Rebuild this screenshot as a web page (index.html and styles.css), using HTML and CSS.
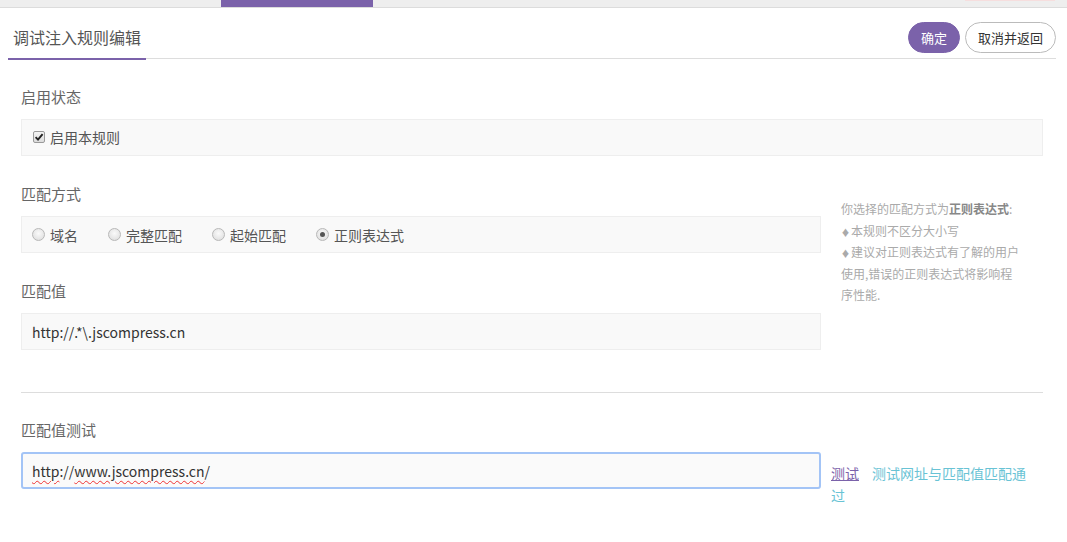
FILE: index.html
```html
<!DOCTYPE html>
<html>
<head>
    <meta charset="utf-8">
    <title>调试注入规则编辑</title>
    <link rel="stylesheet" href="styles.css">
</head>
<body>
    <div class="topbar">
        <span class="topbar-tab"></span>
        <span class="topbar-alert"></span>
    </div>
    <div class="page">
        <div class="page-head">
            <div class="page-title">调试注入规则编辑</div>
            <div class="head-actions">
                <button class="btn btn-primary">确定</button>
                <button class="btn btn-outline">取消并返回</button>
            </div>
        </div>

        <div class="content">
            <div class="field field-first">
                <div class="field-label">启用状态</div>
                <div class="field-box">
                    <label class="check">
                        <span class="check-box">
                            <svg width="10" height="10" viewBox="0 0 10 10"><path d="M1.6 5.2 L4 7.6 L8.6 2.2" fill="none" stroke="#222" stroke-width="1.9"/></svg>
                        </span>
                        启用本规则
                    </label>
                </div>
            </div>

            <div class="match-row">
                <div class="match-main">
                    <div class="field">
                        <div class="field-label">匹配方式</div>
                        <div class="field-box">
                            <label class="radio"><span class="radio-dot"></span>域名</label>
                            <label class="radio"><span class="radio-dot"></span>完整匹配</label>
                            <label class="radio"><span class="radio-dot"></span>起始匹配</label>
                            <label class="radio"><span class="radio-dot checked"></span>正则表达式</label>
                        </div>
                    </div>
                    <div class="field">
                        <div class="field-label">匹配值</div>
                        <div class="field-box value-text">http://.*\.jscompress.cn</div>
                    </div>
                </div>
                <div class="match-note">
                    你选择的匹配方式为<b>正则表达式</b>:<br>
                    <span class="mark">♦</span>本规则不区分大小写<br>
                    <span class="mark">♦</span>建议对正则表达式有了解的用户使用,错误的正则表达式将影响程序性能.
                </div>
            </div>

            <hr class="divider">

            <div class="field field-test">
                <div class="field-label">匹配值测试</div>
                <div class="test-row">
                    <div class="test-input"><span class="typo">http</span>://<span class="typo">www.jscompress.cn</span>/</div>
                    <div class="test-side">
                        <a class="test-link" href="#">测试</a><span class="test-ok">测试网址与匹配值匹配通过</span>
                    </div>
                </div>
            </div>
        </div>
    </div>
</body>
</html>
```

FILE: styles.css
```css
body {
    margin: 0;
    font-family: "Microsoft YaHei", "Noto Sans CJK SC", sans-serif;
    color: #333;
    background: #fff;
}
.topbar {
    display: flex;
    height: 7px;
    background: #eeeeee;
    border-bottom: 1px solid #dcdcdc;
}
.topbar-tab {
    width: 152px;
    margin-left: 221px;
    background: #7b62aa;
}
.topbar-alert {
    width: 90px;
    height: 1px;
    margin-left: auto;
    margin-right: 12px;
    background: #f6dede;
}
.page {
    padding: 0 11px 0 8px;
}
.page-head {
    display: flex;
    align-items: flex-start;
    height: 36px;
    padding-top: 14px;
    border-bottom: 1px solid #dddddd;
}
.page-title {
    height: 36px;
    padding: 0 5px;
    line-height: 30px;
    font-size: 16px;
    color: #555;
    border-bottom: 2px solid #7b62aa;
    box-sizing: content-box;
}
.head-actions {
    display: flex;
    gap: 5px;
    margin-left: auto;
}
.btn {
    height: 31px;
    padding: 0 12px;
    border-radius: 16px;
    font-family: inherit;
    font-size: 13px;
    line-height: 29px;
    cursor: pointer;
}
.btn-primary {
    background: #7b62aa;
    border: 1px solid #7b62aa;
    color: #fff;
}
.btn-outline {
    background: #fff;
    border: 1px solid #bbbbbb;
    color: #333;
}
.content {
    padding: 0 13px;
}
.field {
    margin-top: 28px;
}
.field-label {
    font-size: 15px;
    line-height: 20px;
    color: #666;
    margin-bottom: 12px;
}
.field-box {
    display: flex;
    align-items: center;
    height: 35px;
    padding: 0 10px;
    background: #f9f9f9;
    border: 1px solid #eeeeee;
    font-size: 14px;
    color: #555;
}
.check, .radio {
    display: flex;
    align-items: center;
}
.check {
    margin-top: -2px;
}
.check-box {
    display: flex;
    align-items: center;
    justify-content: center;
    width: 10px;
    height: 10px;
    margin: 0 5px 0 1px;
    border: 1px solid #9a9a9a;
    border-radius: 2px;
    background: linear-gradient(#f4f4f4, #dcdcdc);
}
.radio {
    margin-right: 30px;
}
.radio-dot {
    position: relative;
    width: 11px;
    height: 11px;
    margin-right: 5px;
    border: 1px solid #b8b8b8;
    border-radius: 50%;
    background: radial-gradient(circle at 50% 40%, #fafafa, #dadada);
}
.radio-dot.checked::after {
    content: "";
    position: absolute;
    left: 3px;
    top: 3px;
    width: 5px;
    height: 5px;
    border-radius: 50%;
    background: #555;
}
.match-row {
    display: flex;
}
.match-main {
    flex: none;
    width: 800px;
}
.match-note {
    width: 182px;
    padding: 42px 0 0 20px;
    font-size: 12px;
    line-height: 21.6px;
    color: #aaa;
}
.match-note b {
    color: #888;
}
.mark {
    font-size: 9px;
    line-height: 1;
    margin-right: 1px;
}
.value-text {
    color: #333;
}
.divider {
    margin: 42px 0 0;
    border: 0;
    border-top: 1px solid #dddddd;
}
.field-test {
    margin-top: 27px;
}
.test-row {
    display: flex;
}
.test-input {
    flex: none;
    width: 778px;
    height: 33px;
    padding: 0 9px;
    display: flex;
    align-items: center;
    background: #fafafa;
    border: 2px solid #a3c4f6;
    border-radius: 3px;
    font-size: 14px;
    color: #333;
}
.typo {
    text-decoration: underline wavy #e33;
    text-decoration-thickness: 1px;
    text-underline-offset: 3px;
}
.test-side {
    width: 200px;
    padding: 10px 0 0 10px;
    font-size: 14px;
    line-height: 22px;
}
.test-link {
    color: #7b62aa;
    margin-right: 13px;
}
.test-ok {
    color: #69c3d5;
}
```
